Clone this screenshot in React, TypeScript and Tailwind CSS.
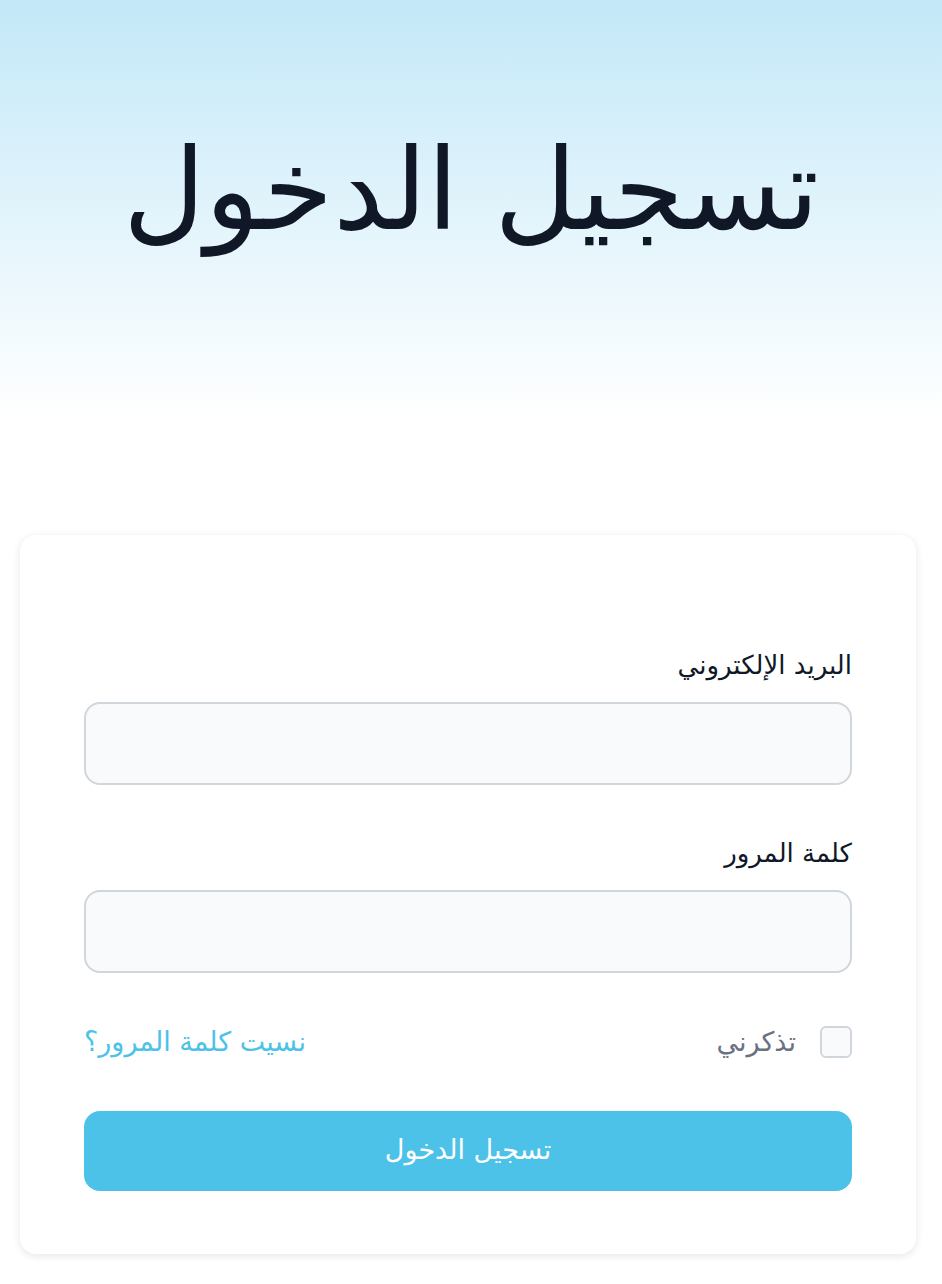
import { useState } from "react";

export default function App() {
    const [email, setEmail] = useState("");
    const [password, setPassword] = useState("");
    const [remember, setRemember] = useState(false);

    return (
        <div
            dir="rtl"
            className="min-h-screen bg-white"
            style={{ fontFamily: '"DejaVu Sans", "Noto Sans", sans-serif' }}
        >
            {/* Header */}
            <div className="h-[420px] bg-gradient-to-b from-[#c3e8f8] to-white flex justify-center pt-[134px]">
                <h1 className="text-[113px] leading-none text-gray-900">تسجيل الدخول</h1>
            </div>

            {/* Card */}
            <div className="pl-5 pr-[26px] pt-[115px] pb-8">
                <div className="bg-white rounded-2xl shadow-[0_2px_8px_rgba(0,0,0,0.1)] px-16 pt-[112px] pb-[63px]">
                    <form className="flex flex-col" onSubmit={(e) => e.preventDefault()}>
                        <label className="text-[26px] text-gray-900 leading-9 mb-[19px]">البريد الإلكتروني</label>
                        <input
                            type="email"
                            value={email}
                            onChange={(e) => setEmail(e.target.value)}
                            className="h-[83px] rounded-2xl border-2 border-gray-300 bg-gray-50 px-4 outline-none"
                        />

                        <label className="text-[26px] text-gray-900 leading-9 mt-[50px] mb-[19px]">كلمة المرور</label>
                        <input
                            type="password"
                            value={password}
                            onChange={(e) => setPassword(e.target.value)}
                            className="h-[83px] rounded-2xl border-2 border-gray-300 bg-gray-50 px-4 outline-none"
                        />

                        <div className="flex items-center justify-between mt-[49px]">
                            <label className="flex items-center gap-6 cursor-pointer">
                                <input
                                    type="checkbox"
                                    checked={remember}
                                    onChange={(e) => setRemember(e.target.checked)}
                                    className="appearance-none w-[32px] h-[32px] rounded-md border-2 border-gray-300 bg-gray-50 checked:bg-[#4cc2e8]"
                                />
                                <span className="text-[27px] text-gray-500">تذكرني</span>
                            </label>
                            <a href="#" className="text-[27px] text-[#4cc2e8]">نسيت كلمة المرور؟</a>
                        </div>

                        <button
                            type="submit"
                            className="mt-[48px] h-[80px] rounded-2xl bg-[#4cc2e8] text-white text-[27px]"
                        >
                            تسجيل الدخول
                        </button>
                    </form>
                </div>
            </div>
        </div>
    );
}
